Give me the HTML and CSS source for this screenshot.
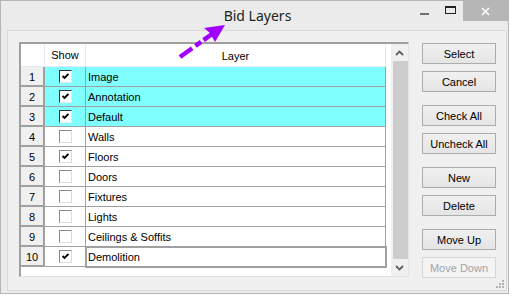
FILE: index.html
```html
<!DOCTYPE html>
<html lang="en">
<head>
    <meta charset="UTF-8">
    <meta name="viewport" content="width=device-width, initial-scale=1.0">
    <title>Bid Layers</title>
    <link rel="stylesheet" href="styles.css">
</head>
<body>
    <div class="window">
        <div class="titlebar">
            <div></div>
            <div class="title">Bid Layers</div>
            <div class="controls">
                <span class="ctl min"><i></i></span>
                <span class="ctl max"><i></i></span>
                <span class="ctl close">
                    <svg width="9" height="9" viewBox="0 0 9 9"><path d="M1 1 L8 8 M8 1 L1 8" stroke="#fff" stroke-width="1.6" fill="none"/></svg>
                </span>
            </div>
        </div>

        <div class="client">
            <div class="grid">
                <div class="table">
                    <div class="row head">
                        <div class="cell rh"></div>
                        <div class="cell show">Show</div>
                        <div class="cell layer">Layer</div>
                    </div>
                    <div class="row sel">
                        <div class="cell rh">1</div>
                        <div class="cell show"><span class="box"><svg class="tick" width="7" height="7" viewBox="0 0 7 7"><path d="M0.5 3 L2.5 5 L6.5 1" stroke="#000" stroke-width="1.9" fill="none"/></svg></span></div>
                        <div class="cell layer">Image</div>
                    </div>
                    <div class="row sel">
                        <div class="cell rh">2</div>
                        <div class="cell show"><span class="box"><svg class="tick" width="7" height="7" viewBox="0 0 7 7"><path d="M0.5 3 L2.5 5 L6.5 1" stroke="#000" stroke-width="1.9" fill="none"/></svg></span></div>
                        <div class="cell layer">Annotation</div>
                    </div>
                    <div class="row sel">
                        <div class="cell rh">3</div>
                        <div class="cell show"><span class="box"><svg class="tick" width="7" height="7" viewBox="0 0 7 7"><path d="M0.5 3 L2.5 5 L6.5 1" stroke="#000" stroke-width="1.9" fill="none"/></svg></span></div>
                        <div class="cell layer">Default</div>
                    </div>
                    <div class="row">
                        <div class="cell rh">4</div>
                        <div class="cell show"><span class="box"></span></div>
                        <div class="cell layer">Walls</div>
                    </div>
                    <div class="row">
                        <div class="cell rh">5</div>
                        <div class="cell show"><span class="box"><svg class="tick" width="7" height="7" viewBox="0 0 7 7"><path d="M0.5 3 L2.5 5 L6.5 1" stroke="#000" stroke-width="1.9" fill="none"/></svg></span></div>
                        <div class="cell layer">Floors</div>
                    </div>
                    <div class="row">
                        <div class="cell rh">6</div>
                        <div class="cell show"><span class="box"></span></div>
                        <div class="cell layer">Doors</div>
                    </div>
                    <div class="row">
                        <div class="cell rh">7</div>
                        <div class="cell show"><span class="box"></span></div>
                        <div class="cell layer">Fixtures</div>
                    </div>
                    <div class="row">
                        <div class="cell rh">8</div>
                        <div class="cell show"><span class="box"></span></div>
                        <div class="cell layer">Lights</div>
                    </div>
                    <div class="row">
                        <div class="cell rh">9</div>
                        <div class="cell show"><span class="box"></span></div>
                        <div class="cell layer">Ceilings &amp; Soffits</div>
                    </div>
                    <div class="row">
                        <div class="cell rh">10</div>
                        <div class="cell show"><span class="box"><svg class="tick" width="7" height="7" viewBox="0 0 7 7"><path d="M0.5 3 L2.5 5 L6.5 1" stroke="#000" stroke-width="1.9" fill="none"/></svg></span></div>
                        <div class="cell layer current">Demolition</div>
                    </div>
                    <div class="filler"></div>
                </div>
                <div class="vscroll">
                    <div class="sbtn">
                        <svg width="9" height="6" viewBox="0 0 9 6"><path d="M1 5 L4.5 1.5 L8 5" stroke="#606060" stroke-width="1.8" fill="none"/></svg>
                    </div>
                    <div class="thumb"></div>
                    <div class="sbtn">
                        <svg width="9" height="6" viewBox="0 0 9 6"><path d="M1 1 L4.5 4.5 L8 1" stroke="#606060" stroke-width="1.8" fill="none"/></svg>
                    </div>
                </div>
            </div>

            <div class="buttons">
                <div class="group">
                    <button>Select</button>
                    <button>Cancel</button>
                </div>
                <div class="group">
                    <button>Check All</button>
                    <button>Uncheck All</button>
                </div>
                <div class="group">
                    <button>New</button>
                    <button>Delete</button>
                </div>
                <div class="group">
                    <button>Move Up</button>
                    <button disabled>Move Down</button>
                </div>
            </div>

            <svg class="grip" width="9" height="9" viewBox="0 0 9 9">
                <rect x="7" y="1" width="2" height="2" fill="#b0b0b0"/>
                <rect x="4" y="4" width="2" height="2" fill="#b0b0b0"/>
                <rect x="7" y="4" width="2" height="2" fill="#b0b0b0"/>
                <rect x="1" y="7" width="2" height="2" fill="#b0b0b0"/>
                <rect x="4" y="7" width="2" height="2" fill="#b0b0b0"/>
                <rect x="7" y="7" width="2" height="2" fill="#b0b0b0"/>
            </svg>
        </div>
    </div>

    <!-- callout pointing at the title -->
    <svg class="callout" width="514" height="297" viewBox="0 0 514 297">
        <path d="M180 57 L212 34" stroke="#9f00ff" stroke-width="4.5" stroke-dasharray="15 4 7 3 30" fill="none"/>
        <polygon points="225,25 204,28 210,33 215,42" fill="#9f00ff"/>
    </svg>
</body>
</html>
```

FILE: styles.css
```css
body {
    margin: 0;
    background-color: #ffffff;
    font-family: 'Liberation Sans', Arial, sans-serif;
    font-size: 11px;
    color: #000;
}
.window {
    box-sizing: border-box;
    width: 509px;
    height: 294px;
    border: 1px solid #b5b5b5;
    background-color: #ebebeb;
    display: flex;
    flex-direction: column;
}
.titlebar {
    height: 29px;
    display: grid;
    grid-template-columns: 1fr auto 1fr;
}
.title {
    font-family: 'Noto Sans', 'Open Sans', sans-serif;
    font-size: 14px;
    color: #222;
    line-height: 29px;
    padding-left: 6px;
}
.controls {
    justify-self: end;
    display: flex;
    align-items: flex-start;
}
.ctl {
    width: 26px;
    height: 20px;
    display: flex;
    align-items: center;
    justify-content: center;
}
.min i {
    width: 9px;
    height: 2px;
    margin-top: 6px;
    background-color: #707070;
}
.max i {
    box-sizing: border-box;
    width: 11px;
    height: 8px;
    margin-top: -2px;
    border: 1px solid #222;
    border-top-width: 2px;
}
.close {
    width: 45px;
    background-color: #b6b6b6;
}
.client {
    position: relative;
    flex: 1;
    margin: 0 1px 2px 6px;
    border: 1px solid #d9d9d9;
    background-color: #f0f0f0;
    padding: 11px 0 0 11px;
    display: flex;
    gap: 13px;
}
.grid {
    box-sizing: border-box;
    width: 390px;
    height: 235px;
    border-top: 2px solid #a0a0a0;
    border-left: 2px solid #a0a0a0;
    border-right: 1px solid #e3e3e3;
    border-bottom: 1px solid #e3e3e3;
    background-color: #fff;
    display: flex;
}
.table {
    flex: 1;
    display: flex;
    flex-direction: column;
}
.row {
    display: flex;
    height: 20px;
}
.cell {
    box-sizing: border-box;
    height: 20px;
    line-height: 21px;
    border-bottom: 1px solid #a0a0a0;
    border-right: 1px solid #a0a0a0;
    white-space: nowrap;
    overflow: hidden;
}
.rh {
    width: 24px;
    text-align: center;
    background-color: #f0f0f0;
    border-right: 2px solid #a0a0a0;
    box-shadow: inset 0 -1px 0 #a0a0a0;
}
.show {
    width: 41px;
    display: flex;
    align-items: center;
    justify-content: center;
}
.layer {
    width: 300px;
    padding-left: 2px;
}
.head {
    height: 23px;
}
.head .cell {
    height: 23px;
    line-height: 25px;
    background-color: #fff;
    border-bottom: 1px solid #e2e9f2;
    border-right: 1px solid #e2e9f2;
    box-shadow: none;
}
.head .layer {
    text-align: center;
    padding-left: 0;
}
.sel .show,
.sel .layer {
    background-color: #80ffff;
}
.current {
    position: relative;
    overflow: visible;
    outline: 2px solid #a0a0a0;
    outline-offset: -1px;
}
.filler {
    flex: 1;
}
.box {
    box-sizing: border-box;
    width: 13px;
    height: 13px;
    background-color: #fff;
    border: 1px solid;
    border-color: #8a8a8a #dcdcdc #dcdcdc #8a8a8a;
    display: flex;
    align-items: center;
    justify-content: center;
}
.sel .box {
    border-color: #303030 #e8e8e8 #e8e8e8 #303030;
}
.tick {
    display: block;
}
.vscroll {
    width: 17px;
    display: flex;
    flex-direction: column;
    background-color: #f0f0f0;
}
.sbtn {
    height: 17px;
    display: flex;
    align-items: center;
    justify-content: center;
}
.thumb {
    flex: 1;
    margin-left: 2px;
    background-color: #cdcdcd;
}
.buttons {
    display: flex;
    flex-direction: column;
    gap: 13px;
    margin-top: 1px;
}
.group {
    display: flex;
    flex-direction: column;
    gap: 7px;
}
button {
    width: 74px;
    height: 21px;
    padding: 0;
    font-family: 'Liberation Sans', Arial, sans-serif;
    font-size: 11px;
    color: #000;
    border: 1px solid #acacac;
    background: linear-gradient(#f0f0f0, #e5e5e5);
}
button:disabled {
    color: #a3a3a3;
    border-color: #d5d5d5;
    background: #f4f4f4;
}
.grip {
    position: absolute;
    right: 2px;
    bottom: 2px;
}
.callout {
    position: absolute;
    left: 0;
    top: 0;
    pointer-events: none;
}
```
